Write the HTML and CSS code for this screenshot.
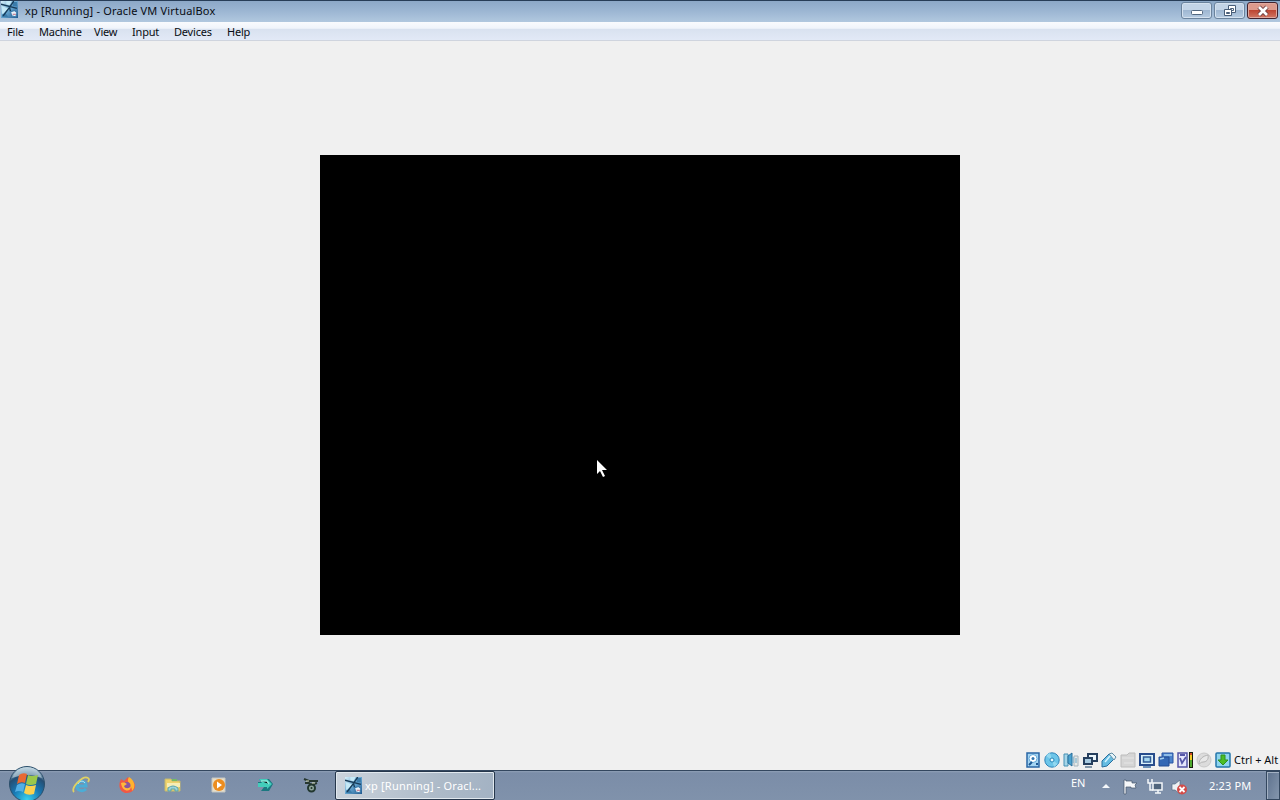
FILE: index.html
```html
<!DOCTYPE html>
<html lang="en">
<head>
  <meta charset="UTF-8" />
  <meta name="viewport" content="width=device-width, initial-scale=1.0"/>
  <title>xp [Running] - Oracle VM VirtualBox</title>
  <link rel="stylesheet" href="styles.css">
</head>
<body>
  <!-- shared VirtualBox machine icon -->
  <svg class="defs">
    <defs>
      <linearGradient id="vmBlue" x2="1" y2="1">
        <stop offset="0" stop-color="#d8f0fa"/>
        <stop offset="0.5" stop-color="#64a4cf"/>
        <stop offset="1" stop-color="#20598f"/>
      </linearGradient>
      <symbol id="vm" viewBox="0 0 16 16">
        <path fill="url(#vmBlue)" d="M0 0h16v16H0z"/>
        <path fill="#3b7cab" d="M11 1h4v4h-4zM1 13l3-2 3 4H1z"/>
        <path fill="#c5e9f7" d="M1 5l6 2-5 5H1zM5 0h5L8 4 5 3z"/>
        <path fill="none" stroke="#173b58" stroke-width="1.300" d="M0 3l15 4M12 0L8 6l-6 8M8 6l1 4"/>
        <path fill="#e8f3fa" stroke="#3977a8" d="M9 10l4-1 2 2-1 4-4-1z"/>
        <path stroke="#be6e86" d="M11 12.500h3"/>
      </symbol>
    </defs>
  </svg>

  <header class="titlebar">
    <svg class="title-icon"><use href="#vm"/></svg>
    <h1 class="title">xp [Running] - Oracle VM VirtualBox</h1>
    <div class="window-buttons">
      <button class="win-btn" aria-label="Minimize">
        <svg width="14" height="14" viewBox="0 0 14 14"><rect x="1.500" y="6.500" width="11" height="4" rx="1" fill="#fff" stroke="#52677f"/></svg>
      </button>
      <button class="win-btn" aria-label="Restore">
        <svg width="14" height="14" viewBox="0 0 14 14" fill="#fff" stroke="#485d78"><path d="M5.500 1.500h7v7h-7zM7.500 4.500h3v2h-3z"/><path d="M1.500 5.500h7v6h-7z"/><path fill="#91aac9" d="M3.500 8.500h3v1h-3z"/></svg>
      </button>
      <button class="win-btn close" aria-label="Close">
        <svg width="14" height="14" viewBox="0 0 14 14"><path d="M3 3l8 8M11 3l-8 8" stroke="#693a3d" stroke-width="4.500"/><path d="M3 3l8 8M11 3l-8 8" stroke="#fff" stroke-width="2.700"/></svg>
      </button>
    </div>
  </header>

  <nav class="menubar">
    <span>File</span>
    <span>Machine</span>
    <span>View</span>
    <span>Input</span>
    <span>Devices</span>
    <span>Help</span>
  </nav>

  <main class="workspace">
    <div class="screen">
      <svg class="cursor" viewBox="0 0 12 19"><path fill="#fff" d="M1 1v14l3-3 3 6 2-1-3-6h5z"/></svg>
    </div>
  </main>

  <div class="statusbar">
    <!-- hard disk -->
    <svg viewBox="0 0 16 16"><path fill="#a5d5f3" stroke="#2865a5" stroke-width="1.500" d="M2 1h12v14H2z"/><circle cx="8" cy="6.500" r="4" fill="#fff" stroke="#62a8d8"/><circle cx="8" cy="6.500" r="1.500" fill="#3277b0"/><path stroke="#1d5793" stroke-width="2" d="M4 13l3-3M11 12h2"/></svg>
    <!-- optical disc -->
    <svg viewBox="0 0 16 16"><circle cx="8" cy="8" r="7.200" fill="#6cc5e9" stroke="#2e83b8"/><path fill="#92d8f0" d="M8 8L2 4a7 7 0 0 1 4-3zM8 8l6 4-4 3z"/><circle cx="8" cy="8" r="2" fill="#e9faff" stroke="#2686b8"/></svg>
    <!-- audio -->
    <svg viewBox="0 0 16 16"><path fill="#a5d5e8" stroke="#4690b4" d="M1 2h4v12H1z"/><path fill="#4aa2cf" stroke="#286e9c" d="M5 4l4-3v13l-4-3z"/><path fill="#e8e9e6" stroke="#a6b4bd" d="M11 4h4v10h-4z"/><path stroke="#6aa9c9" d="M10 5v6M13 6v5"/></svg>
    <!-- network -->
    <svg viewBox="0 0 16 16"><path fill="#eaf5fb" stroke="#263f5e" stroke-width="2" d="M6 2h9v7H6z"/><path fill="#a8cae0" stroke="#263f5e" stroke-width="2" d="M2 6h8v6H2z"/><path stroke="#8396a9" stroke-width="2" d="M3 15h7"/></svg>
    <!-- usb -->
    <svg viewBox="0 0 16 16"><path fill="#65bce2" stroke="#286e9e" d="M1 15V9l7-7 5 5-7 7z"/><path fill="#e6f4f9" stroke="#5d8ba5" d="M8 2l3-1 4 4-2 3z"/><path stroke="#d4f3ff" stroke-width="1.500" d="M4 10l5-6"/></svg>
    <!-- shared folders, off -->
    <svg viewBox="0 0 16 16"><path fill="#d5d5d5" stroke="#bcbcbc" d="M1 3h6l2-2h6v14H1z"/><path stroke="#e5e5e5" d="M2 6h12M4 11h9"/></svg>
    <!-- display -->
    <svg viewBox="0 0 16 16"><path fill="#d9f0fa" stroke="#284c8c" stroke-width="2" d="M1 2h14v11H1z"/><path fill="#a5d5ee" stroke="#315b96" stroke-width="1.500" d="M4.500 5h7v5h-7z"/><path stroke="#6b91b9" stroke-width="2" d="M4 15h8"/></svg>
    <!-- recording -->
    <svg viewBox="0 0 16 16"><path fill="#4c83cc" stroke="#2855a3" d="M4 1h11v10H4z"/><path fill="#3468b5" stroke="#244d93" d="M1 5h10v9H1z"/><path stroke="#a7d1f0" stroke-width="1.500" d="M6 3h8M2 7l4-1"/></svg>
    <!-- cpu -->
    <svg viewBox="0 0 16 16"><path fill="#e4e6fb" stroke="#5454a5" stroke-width="1.500" d="M1 1h9v14H1z"/><path fill="none" stroke="#5557a7" stroke-width="1.800" d="M3 3h5M3 6l2 5 4-6"/><path fill="#171c0d" d="M12 0h4v16h-4z"/><path fill="#4ea92e" d="M13 8h2v7h-2z"/><path fill="#f0ca28" d="M13 3h2v5h-2z"/><path fill="#d44b28" d="M13 1h2v2h-2z"/></svg>
    <!-- mouse, off -->
    <svg viewBox="0 0 16 16"><circle cx="8" cy="8" r="7" fill="#dcdcdc" stroke="#c9c9c9"/><path fill="#e8e8e8" stroke="#b5b5b5" d="M3 12c0-5 4-8 9-9 1 5-2 7-5 7s-3 2-4 2z"/></svg>
    <!-- host key -->
    <svg viewBox="0 0 16 16"><rect x="1" y="1" width="14" height="14" rx="1" fill="#8fd5ee" stroke="#2475aa" stroke-width="1.500"/><path fill="#4cbd25" stroke="#2f9220" d="M6 3h4v5h3l-5 5-5-5h3z"/></svg>
    <span class="host-key">Ctrl + Alt</span>
  </div>

  <footer class="taskbar">
    <button class="start" aria-label="Start">
      <svg viewBox="0 0 38 38">
        <defs>
          <radialGradient id="orb" cx="0.5" cy="0.95" r="0.9">
            <stop offset="0" stop-color="#38d2ef"/>
            <stop offset="0.45" stop-color="#1878b4"/>
            <stop offset="0.78" stop-color="#254e73"/>
            <stop offset="1" stop-color="#bfd4e0"/>
          </radialGradient>
        </defs>
        <circle cx="19" cy="19" r="17.500" fill="url(#orb)" stroke="#2b4f6b"/>
        <path fill="#b8d0dc" opacity="0.65" d="M4 13a16 16 0 0 1 30 0q-15-6-30 0z"/>
        <path fill="#e96931" d="M11 10q4-3 8-1l-2 9q-4-2-8 1z"/>
        <path fill="#9ac84b" d="M20 10q4 2 10 0l-2 9q-6 2-10 0z"/>
        <path fill="#53afe5" d="M9 20q4-3 8-1l-2 8q-4-2-8 0z"/>
        <path fill="#fbd250" d="M18 20q4 2 10 0l-2 9q-6 2-10-1z"/>
      </svg>
    </button>
    <div class="pinned">
      <!-- internet explorer -->
      <svg viewBox="0 0 18 18"><path fill="none" stroke="#4badd6" stroke-width="3" d="M5 10h9c0-6-8-6-9-1-1 6 6 7 9 4"/><path fill="none" stroke="#bee7f5" d="M6 8c1-3 5-4 7-1"/><path fill="none" stroke="#e0d162" stroke-width="1.800" d="M2 16C-2 12 11-1 16 2q2 1 0 4"/></svg>
      <!-- firefox -->
      <svg viewBox="0 0 18 18"><path fill="#f05945" d="M3 3l3 2 4-4 2 3 3 1c5 6 0 12-6 12S-1 11 3 3z"/><path fill="#ffb42e" d="M11 1c6 4 7 10 3 14 0-5-3-5-3-8-2-2-1-4 0-6z"/><circle cx="9" cy="9.500" r="3.500" fill="#8a55a0"/><path fill="#ffb83c" d="M3 7c4-1 4 0 6 1l-3 2c1 3 5 3 7 0 0 7-9 6-10-3z"/></svg>
      <!-- explorer -->
      <svg viewBox="0 0 18 18"><path fill="#eed36d" stroke="#c3b86e" d="M1 3h6l1 2h8v10H1z"/><path fill="#f6edb6" d="M3 7h13v4H3z"/><path fill="#9ed3d7" stroke="#59a3ae" d="M4 15v-3q5-4 10 0v3h-3v-2H7v2z"/><path fill="#74b967" d="M8 3h5v2H8z"/></svg>
      <!-- media player -->
      <svg viewBox="0 0 18 18"><path fill="#e9dfc7" stroke="#c4c7c5" d="M2 2h13v14H2z"/><circle cx="9" cy="9" r="6" fill="#ec8d20"/><path fill="#fff" d="M7 5.500l5 3.500-5 3.500z"/></svg>
      <!-- camtasia -->
      <svg viewBox="0 0 18 18"><path fill="#1b7880" d="M3 3h10l4 5-4 7H5l3-4H2V6h3z"/><path fill="#42cdbb" d="M3 3h8l5 5-5 5v-2H2V7h4z"/><path stroke="#8ee9dc" stroke-width="1.500" d="M5 5h6l2 3"/></svg>
      <!-- gear tool -->
      <svg viewBox="0 0 18 18"><path fill="none" stroke="#26372f" stroke-width="2" d="M2 3l5 2h9M3 7h4l2 2 6-2"/><circle cx="9.500" cy="12" r="3.500" fill="#8fa69d" stroke="#22372f" stroke-width="2"/><circle cx="9.500" cy="12" r="1" fill="#203529"/><path stroke="#d7ddbb" d="M4 5h3M10 7h3"/></svg>
    </div>
    <button class="task">
      <svg><use href="#vm"/></svg>
      <span>xp [Running] - Oracl...</span>
    </button>
    <div class="tray">
      <span class="lang">EN</span>
      <svg class="tray-arrow" viewBox="0 0 8 5"><path fill="#f4f7fa" d="M4 0l4 4H0z"/></svg>
      <svg viewBox="0 0 16 16"><path fill="#f6f8fa" stroke="#45566b" stroke-width="0.700" d="M1 1h2v1h6v2h5l-2 2 1 3H8V8H3v7H1z"/></svg>
      <svg viewBox="0 0 16 16"><path fill="#50657d" stroke="#f4f7fa" stroke-width="1.500" d="M6 4h9v7H6zM8 14h6M11 11v3"/><path fill="none" stroke="#f4f7fa" stroke-width="1.500" d="M1 0v4h4V0M3 4v7h3"/></svg>
      <svg viewBox="0 0 16 16"><path fill="#edf1f3" stroke="#536a82" stroke-width="0.700" d="M1 5h3l5-4v14l-5-4H1z"/><circle cx="11" cy="10.500" r="5" fill="#d34b48"/><path stroke="#fff" stroke-width="1.800" d="M8.500 8l5 5M13.500 8l-5 5"/></svg>
      <span class="clock">2:23 PM</span>
      <div class="show-desktop"></div>
    </div>
  </footer>
</body>
</html>
```
FILE: styles.css
```css
* {
  box-sizing: border-box;
}

body {
  margin: 0;
  width: 1280px;
  height: 800px;
  overflow: hidden;
  display: flex;
  flex-direction: column;
  background-color: #f0f0f0;
  color: #080c12;
  font-family: "Noto Sans", sans-serif;
  font-size: 11px;
}

button {
  margin: 0;
  padding: 0;
  border: none;
  font: inherit;
}

svg {
  display: block;
  flex-shrink: 0;
}

.defs {
  position: absolute;
  width: 0;
  height: 0;
}

.titlebar {
  display: flex;
  height: 22px;
  padding-left: 1px;
  border-top: 1px solid #273d57;
  background: linear-gradient(#8ca8c7, #9bb5d2 45%, #b1c8df);
}

.title-icon {
  width: 17px;
  height: 17px;
}

.title {
  margin: 0 0 0 7px;
  font-size: 11px;
  font-weight: normal;
  letter-spacing: 0.17px;
  line-height: 19px;
  white-space: nowrap;
}

.window-buttons {
  display: flex;
  gap: 2px;
  margin-left: auto;
  padding-top: 1px;
}

.win-btn {
  width: 31px;
  height: 17px;
  display: flex;
  align-items: center;
  justify-content: center;
  border: 1px solid #6b839d;
  border-radius: 3px;
  box-shadow: inset 0 0 0 1px #d4e1ef;
  background: linear-gradient(#c3d4e7 45%, #9fb7d2 50%, #b5cbe1);
}

.win-btn.close {
  border-color: #42222d;
  box-shadow: inset 0 0 0 1px #dfa89e;
  background: linear-gradient(#dc9a8c 45%, #bd4633 50%, #d17764);
  margin-right: 2px;
}

.menubar {
  display: grid;
  grid-template-columns: 32px 55px 38px 42px 53px auto;
  height: 19px;
  padding-left: 7px;
  letter-spacing: -0.2px;
  line-height: 20px;
  border-bottom: 1px solid #cfd4de;
  background: linear-gradient(#f9fbfe 0, #f0f4fb 35%, #d9e2f0 40%, #e2e9f6);
}

.workspace {
  flex: 1;
  padding-top: 114px;
}

.screen {
  position: relative;
  width: 640px;
  height: 480px;
  margin: 0 auto;
  background-color: #000;
}

.cursor {
  position: absolute;
  left: 276px;
  top: 304px;
  width: 12px;
  height: 19px;
}

.statusbar {
  height: 20px;
  display: flex;
  align-items: center;
  justify-content: flex-end;
  gap: 3px;
  padding-right: 1px;
}

.statusbar svg {
  width: 16px;
  height: 16px;
}

.host-key {
  width: 45px;
  padding-bottom: 2px;
  white-space: nowrap;
}

.taskbar {
  display: flex;
  height: 30px;
  border-top: 1px solid #34475f;
  background: linear-gradient(#8fa0b6 0, #7b8da8 2px, #8092ab);
}

.start {
  width: 38px;
  height: 38px;
  margin: -6px 0 0 8px;
  background: none;
}

.start svg {
  width: 38px;
  height: 38px;
}

.pinned {
  display: flex;
  gap: 28px;
  padding: 5px 0 0 26px;
}

.pinned svg {
  width: 18px;
  height: 18px;
}

.task {
  display: flex;
  align-items: center;
  gap: 3px;
  width: 160px;
  height: 29px;
  margin-left: 15px;
  padding: 0 0 1px 9px;
  border: 1px solid #26374c;
  border-radius: 2px;
  box-shadow: inset 0 0 0 1px #e1e8ee;
  background: linear-gradient(100deg, #cbd3dc, #adbac8 65%, #a3b2c3);
  color: #fff;
}

.task svg {
  width: 17px;
  height: 17px;
}

.task span {
  letter-spacing: 0.2px;
  white-space: nowrap;
}

.tray {
  display: flex;
  align-items: center;
  margin-left: auto;
  color: #fff;
}

.tray svg {
  width: 16px;
  height: 16px;
  margin: 2px 8px 0 0;
}

.lang {
  width: 31px;
  padding-bottom: 6px;
}

.tray .tray-arrow {
  width: 8px;
  height: 5px;
  margin-right: 13px;
}

.clock {
  width: 57px;
  margin-left: 14px;
  padding-bottom: 1px;
  letter-spacing: 0.15px;
}

.show-desktop {
  width: 14px;
  height: 29px;
  border: 1px solid #33475f;
  box-shadow: inset 1px 1px #a3b1c3;
  background: linear-gradient(110deg, #5d718d, #8496ad);
}
```
